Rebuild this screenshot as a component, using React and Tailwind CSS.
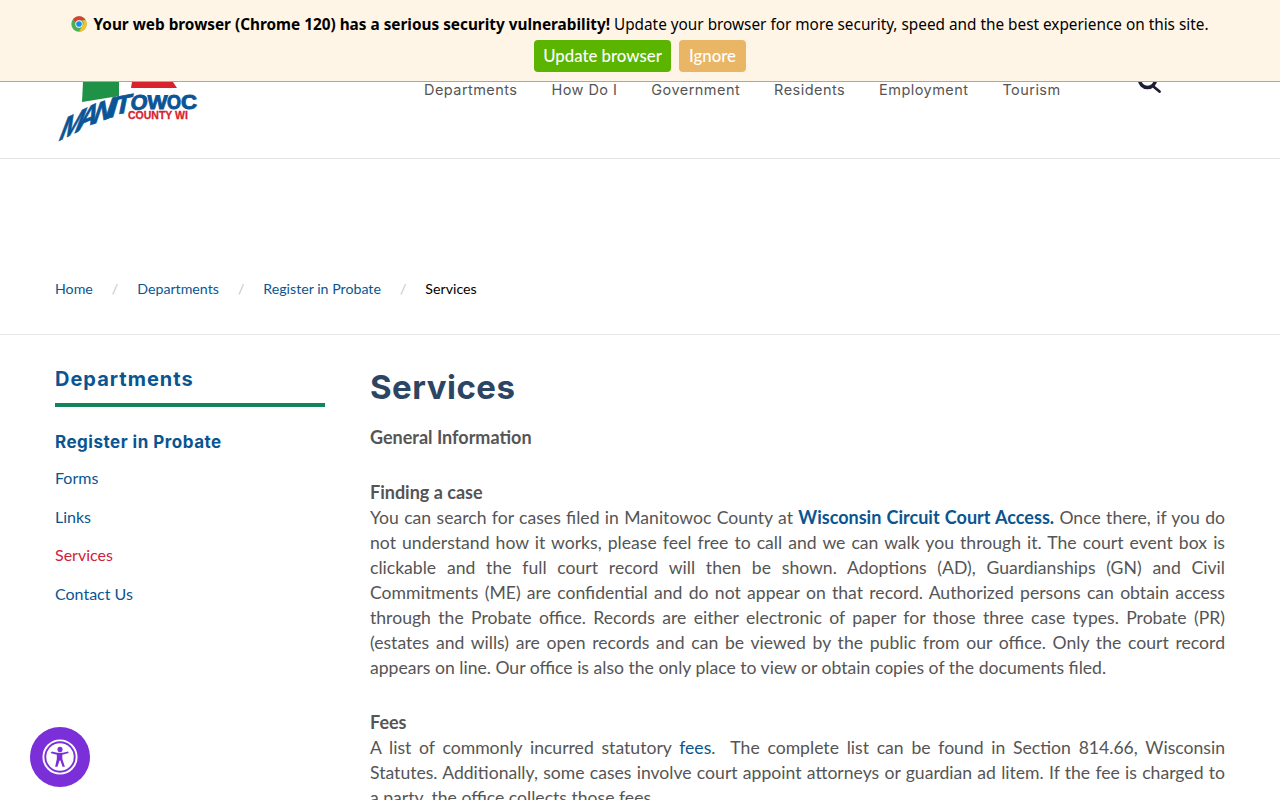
import React from "react";

const body = { fontFamily: "Lato, sans-serif" };
const heading = { fontFamily: "Inter, sans-serif" };

const NAV = ["Departments", "How Do I", "Government", "Residents", "Employment", "Tourism"];

// letter, left x, baseline y, width, baseline slope, cap height, lean, glyph width in em, stroke
const LOGO_LETTERS = [
  ["M", 2, 60, 23, 0.5, 25, 0.38, 0.833, 0.7],
  ["A", 20, 50, 20, 0.45, 24, 0.36, 0.722, 0.7],
  ["N", 36, 43, 19, 0.38, 23, 0.34, 0.722, 0.7],
  ["I", 51, 37, 9, 0.3, 21, 0.3, 0.278, 0.7],
  ["T", 58, 33, 17, 0.18, 19, 0.2, 0.611, 0.8],
  ["O", 75, 28, 17, 0.05, 15, 0.1, 0.778, 0.9],
  ["W", 92, 27, 20, 0, 14, 0.05, 0.944, 0.9],
  ["O", 112, 27, 14, 0, 14, 0, 0.778, 0.9],
  ["C", 126, 27, 16, 0, 14, 0, 0.722, 0.9],
];

const ChromeIcon = () => (
  <svg width="16" height="16" viewBox="0 0 48 48" className="shrink-0">
    <circle cx="24" cy="24" r="23" fill="#4caf50" />
    <path d="M24 1a23 23 0 0 1 20 11.5H24a11.5 11.5 0 0 0-10.5 7L6.6 9A23 23 0 0 1 24 1z" fill="#e53935" />
    <path d="M44 12.5A23 23 0 0 1 24 47l10-17.3A11.5 11.5 0 0 0 33.5 12.5z" fill="#fbc02d" />
    <circle cx="24" cy="24" r="11" fill="#fff" />
    <circle cx="24" cy="24" r="8.5" fill="#1e88e5" />
  </svg>
);

const Logo = () => (
  <svg width="146" height="62" viewBox="0 0 146 62" className="block overflow-visible">
    <path d="M28 0H64V14L27 20Z" fill="#1f9247" />
    <path d="M77 0H118L122 6H76Z" fill="#d8232f" />
    <g fill="#0b5596" stroke="#0b5596" style={{ fontFamily: "'Liberation Sans', sans-serif", fontWeight: 700 }}>
      {LOGO_LETTERS.map(([ch, x, y, w, slope, h, lean, em, weight], i) => {
        const size = h / 0.716;
        const sx = w / (em * size);
        return (
          <text key={i} fontSize={size} strokeWidth={weight} transform={`matrix(${sx} ${-sx * slope} ${-lean} 1 ${x} ${y})`}>
            {ch}
          </text>
        );
      })}
    </g>
    <text x="73" y="37" fontSize="10.5" fill="#d8232f" stroke="#d8232f" strokeWidth="0.3" style={{ fontFamily: "'Liberation Sans', sans-serif", fontWeight: 700 }}>
      COUNTY WI
    </text>
  </svg>
);

const AccessIcon = () => (
  <svg width="36" height="36" viewBox="0 0 34 34" fill="none">
    <circle cx="17" cy="17" r="15.700" stroke="#fff" strokeWidth="1.800" />
    <circle cx="17" cy="17" r="13" fill="#fff" />
    <circle cx="17" cy="9.800" r="2.400" fill="#7a2fd8" />
    <path d="M8 13.200l6 1.600v4l-1.600 7.400h2.200l2-6h.8l2 6h2.200L19.200 18.800v-4l6-1.600-.5-1.500-5 1.300h-5.400l-5-1.300z" fill="#7a2fd8" />
  </svg>
);

const Crumb = ({ children }) => <a className="text-[#0a5591]">{children}</a>;

const Slash = () => <span className="text-[#c4c4c4] mx-[19px]">/</span>;

export default function App() {
  return (
    <div className="relative h-[800px] overflow-hidden bg-white" style={body}>
      {/* update banner */}
      <div className="absolute top-0 left-0 right-0 z-10 h-[82px] bg-[#fff5e6] border-b border-[#c8a84b]">
        <div
          className="flex items-center justify-center gap-[6px] pt-[12px] text-[15.33px] leading-[24px] text-black"
          style={{ fontFamily: "'Noto Sans', sans-serif" }}
        >
          <ChromeIcon />
          <p>
            <b className="font-bold">Your web browser (Chrome 120) has a serious security vulnerability!</b> Update your browser for more security, speed and the best experience on this site.
          </p>
        </div>
        <div className="flex justify-center gap-[8px] mt-[4px] text-[16.8px] font-medium text-white">
          <button className="h-[32px] w-[137px] rounded-[4px] bg-[#5ab400]">Update browser</button>
          <button className="h-[32px] w-[67px] rounded-[4px] bg-[#e9b666]">Ignore</button>
        </div>
      </div>

      {/* site header */}
      <header className="h-[159px] border-b border-[#e4e4e4] flex items-start">
        <div className="ml-[55px] mt-[82px] shrink-0">
          <Logo />
        </div>
        <nav
          className="flex gap-[34px] ml-[223px] mt-[81px] text-[14.5px] leading-[18px] tracking-[0.45px] text-[#555]"
          style={heading}
        >
          {NAV.map((n) => (
            <a key={n}>{n}</a>
          ))}
        </nav>
        <svg width="26" height="26" viewBox="0 0 26 26" className="ml-[76px] mt-[68px]" fill="none" stroke="#1d1d35" strokeWidth="3.500">
          <circle cx="10.500" cy="11.500" r="8" />
          <path d="M17 19l5.500 4.500" strokeWidth="2.800" strokeLinecap="round" />
        </svg>
      </header>

      {/* breadcrumb */}
      <div className="h-[176px] border-b border-[#e8e8e8] pl-[55px] pt-[121px] text-[14.2px] leading-[18px]">
        <Crumb>Home</Crumb>
        <Slash />
        <Crumb>Departments</Crumb>
        <Slash />
        <Crumb>Register in Probate</Crumb>
        <Slash />
        <span className="text-black">Services</span>
      </div>

      <div className="flex pl-[55px] pr-[55px] pt-[30px]">
        {/* side menu */}
        <aside className="w-[270px] shrink-0">
          <h2 className="text-[20px] leading-[28px] font-bold tracking-[1px] text-[#0a5591] pb-[10px] border-b-4 border-[#13855a]" style={heading}>
            Departments
          </h2>
          <h3 className="mt-[24px] text-[17px] leading-[22px] font-bold tracking-[0.5px] text-[#0a5591]" style={heading}>
            Register in Probate
          </h3>
          <ul className="mt-[13px] text-[16px] leading-[24px] text-[#0a5591] flex flex-col gap-[14.67px]">
            <li>Forms</li>
            <li>Links</li>
            <li className="text-[#d0213a]">Services</li>
            <li>Contact Us</li>
          </ul>
        </aside>

        {/* article */}
        <main className="ml-[45px] flex-1 text-[17.6px] leading-[25px] text-[#555]">
          <h1 className="text-[33px] leading-[44px] font-bold tracking-[0.5px] text-[#2c4563]" style={heading}>
            Services
          </h1>
          <p className="mt-[16px] text-[18px] font-bold">General Information</p>
          <p className="mt-[30px] text-[18px] font-bold">Finding a case</p>
          <p className="text-justify">
            You can search for cases filed in Manitowoc County at <a className="text-[18px] font-bold text-[#0a5591]">Wisconsin Circuit Court Access.</a> Once there, if you do not understand how it works, please feel free to call and we can walk you through it. The court event box is clickable and the full court record will then be shown. Adoptions (AD), Guardianships (GN) and Civil Commitments (ME) are confidential and do not appear on that record. Authorized persons can obtain access through the Probate office. Records are either electronic of paper for those three case types. Probate (PR) (estates and wills) are open records and can be viewed by the public from our office. Only the court record appears on line. Our office is also the only place to view or obtain copies of the documents filed.
          </p>
          <p className="mt-[30px] text-[18px] font-bold">Fees</p>
          <p className="text-justify">
            A list of commonly incurred statutory <a className="text-[#0a5591]">fees</a>.&nbsp; The complete list can be found in Section 814.66, Wisconsin Statutes. Additionally, some cases involve court appoint attorneys or guardian ad litem. If the fee is charged to a party, the office collects those fees.
          </p>
        </main>
      </div>

      {/* accessibility widget */}
      <button className="absolute left-[30px] bottom-[13px] w-[60px] h-[60px] rounded-full bg-[#7a2fd8] flex items-center justify-center">
        <AccessIcon />
      </button>
    </div>
  );
}
